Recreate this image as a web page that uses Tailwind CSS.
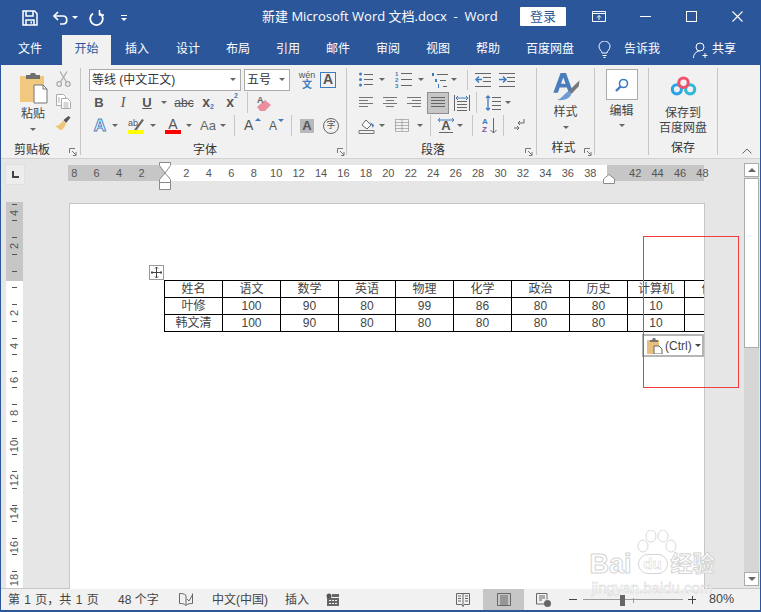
<!DOCTYPE html>
<html lang="zh-CN">
<head>
  <meta charset="UTF-8">
  <title>新建 Microsoft Word 文档.docx - Word</title>
  <script src="https://cdn.jsdelivr.net/npm/@tailwindcss/browser@4"></script>
</head>
<body class="bg-[#2b579a]">
<div class="relative w-[761px] h-[612px] overflow-hidden flex flex-col border-x border-b-2 border-[#2b579a] bg-[#e6e6e6] text-[12px] text-[#444] [font-family:'Liberation_Sans','Noto_Sans_CJK_SC',sans-serif]">

  <!-- Title bar -->
  <header class="h-[35px] shrink-0 bg-[#2b579a] text-white flex items-center">
    <svg class="ml-[21px] w-[16px] h-[16px]" viewBox="0 0 16 16" fill="none" stroke="#fff" stroke-width="1.5"><path d="M1 1h11.5L15 3.5V15H1z"/><path d="M4 1v5h7V1M4 15v-5h8v5"/><path d="M8.5 11.5h1.500v2h-1.500z" fill="#fff" stroke="none"/></svg>
    <svg class="ml-[14px] w-[17px] h-[16px]" viewBox="0 0 17 16" fill="none" stroke="#fff" stroke-width="1.700"><path d="M6 2L2 6l4 4"/><path d="M2 6h9c5 0 5 8 0 8H8"/></svg>
    <i class="ml-[3px] block w-0 h-0 border-x-[3px] border-t-[3px] border-x-transparent border-t-white"></i>
    <svg class="ml-[11px] w-[15px] h-[16px]" viewBox="0 0 15 16" fill="none" stroke="#fff" stroke-width="1.800"><path d="M4 3.500a6.300 6.300 0 1 0 7 0"/><path d="M10.500 0v5H15" stroke-width="1.500"/></svg>
    <span class="ml-[17px] flex flex-col items-center gap-[2px]"><i class="block w-[6px] h-px bg-white"></i><i class="block w-0 h-0 border-x-[3px] border-t-[3px] border-x-transparent border-t-white"></i></span>
    <div class="ml-[135px] mb-[2px] w-[259px] text-[13px] whitespace-pre [font-family:'Open_Sans','Noto_Sans_CJK_SC',sans-serif]">新建 Microsoft Word 文档.docx  -  Word</div>
    <div class="-ml-[1px] mb-[2px] h-[19px] w-[46px] bg-white rounded-[1px] text-[#2b579a] text-[13px] flex items-center justify-center">登录</div>
    <svg class="ml-[26px] mb-[2px] w-[14px] h-[12px]" viewBox="0 0 14 12" fill="none" stroke="#fff"><path d="M.5 .5h13v10H.5z"/><path d="M.5 2.500h13M7 9V4.500M5 6.500l2-2 2 2"/></svg>
    <i class="ml-[34px] mb-[2px] block w-[11px] h-px bg-white"></i>
    <i class="ml-[35px] mb-[2px] block w-[11px] h-[11px] border border-white"></i>
    <svg class="ml-[35px] mb-[2px] w-[11px] h-[11px]" viewBox="0 0 11 11" stroke="#fff" stroke-width="1.100"><path d="M.5 .5l10 10M10.500 .5l-10 10"/></svg>
  </header>

  <!-- Tabs -->
  <nav class="h-[30px] shrink-0 bg-[#2b579a] text-white flex items-center text-[12px] pb-[3px]">
    <a class="w-[61px] pr-[3px] text-center">文件</a>
    <a class="w-[49px] h-[30px] -mb-[3px] pb-[3px] bg-[#f1f1f1] text-[#2b579a] flex items-center justify-center">开始</a>
    <a class="w-[52px] text-center">插入</a>
    <a class="w-[50px] text-center">设计</a>
    <a class="w-[50px] text-center">布局</a>
    <a class="w-[50px] text-center">引用</a>
    <a class="w-[50px] text-center">邮件</a>
    <a class="w-[50px] text-center">审阅</a>
    <a class="w-[50px] text-center">视图</a>
    <a class="w-[50px] text-center">帮助</a>
    <a class="w-[74px] text-center">百度网盘</a>
    <svg class="ml-[11px] mt-[3px] w-[13px] h-[18px]" viewBox="0 0 13 18" fill="none" stroke="#fff"><path d="M4 12c0-2-3-3.500-3-6.500a5.500 5.500 0 0 1 11 0C12 8.500 9 10 9 12z"/><path d="M4.500 14.500h4M5.500 16.500h2"/></svg>
    <a class="ml-[13px] w-[36px]">告诉我</a>
    <svg class="ml-[33px] mt-[3px] w-[15px] h-[17px]" viewBox="0 0 15 17" fill="none" stroke="#fff"><circle cx="7" cy="5" r="4"/><path d="M.5 16c0-4 2.500-6.500 6-7M9.500 13.500h5M12 11v5"/></svg>
    <a class="ml-[4px]">共享</a>
  </nav>

  <!-- Ribbon -->
  <section class="h-[94px] shrink-0 bg-[#f1f1f1] border-b border-[#d2d2d2] flex pt-[3px]">

    <!-- 剪贴板 -->
    <div class="relative w-[80px] h-[87px] border-r border-[#c6c6c6] flex flex-col">
      <div class="h-[75px] flex">
        <div class="ml-[17px] w-[30px] flex flex-col items-center pt-[5px]">
          <svg class="w-[29px] h-[31px]" viewBox="0 0 29 31"><path d="M1 3h24v26H1z" fill="#f0c97e"/><path d="M7 4V2h4l1-2h4l1 2h4v4H7z" fill="#6f6f6f"/><path d="M15 12h9l4 4v14H15z" fill="#fff" stroke="#777"/><path d="M24 12v4h4" fill="none" stroke="#777"/></svg>
          <span class="mt-[2px] leading-[16px]">粘贴</span>
          <i class="mt-[6px] block w-0 h-0 border-x-[3px] border-t-[3px] border-x-transparent border-t-[#666]"></i>
        </div>
        <div class="ml-[7px] flex flex-col items-center pt-[3px] gap-[7px]">
          <svg class="w-[15px] h-[16px]" viewBox="0 0 15 16" fill="none" stroke="#aaa" stroke-width="1.300"><circle cx="3.200" cy="13" r="2.300"/><circle cx="11.800" cy="13" r="2.300"/><path d="M4.500 11L11 .5M10.500 11L4 .5"/></svg>
          <svg class="w-[15px] h-[15px]" viewBox="0 0 15 15" fill="#fff" stroke="#aaa"><path d="M.5 .5h7l2 2v9h-9z"/><path d="M5.500 4.500h6l3 3v7h-9z"/><path d="M7.500 9h5M7.500 11h5M7.500 13h5M2 4h2M2 6h2M2 8h2" fill="none"/></svg>
          <svg class="w-[16px] h-[15px]" viewBox="0 0 16 15"><path d="M15.500 1.500l-2-1.500-5 4 2.500 3z" fill="#555"/><path d="M8 4.500L11 8c-1 3-3 5-5 6.500L0 10c3 0 6-2 8-5.500z" fill="#efc57a"/></svg>
        </div>
      </div>
      <div class="h-[12px] leading-[13px] pl-[13px] pt-[1px] text-[#333]">剪贴板</div>
      <svg class="absolute left-[68px] top-[80px] w-[8px] h-[8px]" viewBox="0 0 8 8" fill="none" stroke="#777"><path d="M.5 5V.5H6M3 3l4 4M7 4v3.500H4"/></svg>
    </div>

    <!-- 字体 -->
    <div class="relative w-[266px] h-[87px] border-r border-[#c6c6c6] flex flex-col">
      <div class="h-[23px] flex items-center">
        <div class="ml-[8px] w-[152px] h-[22px] bg-white border border-[#ababab] flex items-center pl-[2px] text-[12px] text-[#333]">等线 (中文正文)<i class="ml-auto mr-[4px] block w-0 h-0 border-x-[3px] border-t-[3px] border-x-transparent border-t-[#666]"></i></div>
        <div class="ml-[3px] w-[46px] h-[22px] bg-white border border-[#ababab] flex items-center pl-[2px] text-[12px] text-[#333]">五号<i class="ml-auto mr-[4px] block w-0 h-0 border-x-[3px] border-t-[3px] border-x-transparent border-t-[#666]"></i></div>
        <div class="ml-[6px] w-[22px] flex flex-col items-center leading-[10px]"><span class="text-[9px] text-[#555]">wén</span><span class="text-[10px] font-bold text-[#3f7cbf]">文</span></div>
        <div class="ml-[2px] w-[16px] h-[16px] border border-[#3f7cbf] flex items-center justify-center text-[14px] font-bold text-[#555]">A</div>
      </div>
      <div class="h-[23px] flex items-center text-[#555]">
        <span class="ml-[6px] w-[24px] text-center text-[13px] font-bold [font-family:'Liberation_Sans']">B</span>
        <span class="w-[24px] text-center text-[14px] italic [font-family:'Liberation_Serif']">I</span>
        <span class="w-[24px] text-center text-[13px] font-bold underline [font-family:'Liberation_Sans']">U</span>
        <span class="w-[10px] flex justify-center"><i class="block w-0 h-0 border-x-[3px] border-t-[3px] border-x-transparent border-t-[#666]"></i></span>
        <span class="ml-[3px] w-[24px] text-center text-[12px] line-through">abc</span>
        <span class="w-[24px] text-center text-[14px] font-bold">x<sub class="text-[7px] text-[#3f7cbf] align-baseline">2</sub></span>
        <span class="w-[24px] text-center text-[14px] font-bold">x<sup class="text-[7px] text-[#3f7cbf] align-super">2</sup></span>
        <i class="ml-[3px] block w-px h-[21px] bg-[#c6c6c6]"></i>
        <svg class="ml-[9px] w-[15px] h-[16px]" viewBox="0 0 15 16"><path d="M3 16l-3-4 8-7 6 5-6 6z" fill="#eb8f9e"/><text x="0" y="8" font-size="9" fill="#666" font-weight="bold">A</text></svg>
      </div>
      <div class="h-[23px] flex items-center text-[#555]">
        <span class="ml-[12px] w-[14px] text-center text-[17px] font-bold text-white [-webkit-text-stroke:1px_#4a86c5]">A</span>
        <span class="ml-[4px] w-[8px] flex justify-center"><i class="block w-0 h-0 border-x-[3px] border-t-[3px] border-x-transparent border-t-[#666]"></i></span>
        <span class="ml-[9px] w-[16px] flex flex-col items-center"><svg class="w-[16px] h-[12px]" viewBox="0 0 16 12"><text x="0" y="8" font-size="9" fill="#555">ab</text><path d="M6 12l8-11 2 1-8 11z" fill="#666"/></svg><i class="block w-[16px] h-[4px] bg-[#ffff00]"></i></span>
        <span class="ml-[5px] w-[8px] flex justify-center"><i class="block w-0 h-0 border-x-[3px] border-t-[3px] border-x-transparent border-t-[#666]"></i></span>
        <span class="ml-[8px] w-[16px] flex flex-col items-center leading-[12px]"><span class="text-[14px]">A</span><i class="block w-[16px] h-[4px] bg-[#ff0000]"></i></span>
        <span class="ml-[4px] w-[8px] flex justify-center"><i class="block w-0 h-0 border-x-[3px] border-t-[3px] border-x-transparent border-t-[#666]"></i></span>
        <span class="ml-[7px] w-[16px] text-center text-[13px] text-[#666] whitespace-nowrap">Aa</span>
        <span class="ml-[3px] w-[8px] flex justify-center"><i class="block w-0 h-0 border-x-[3px] border-t-[3px] border-x-transparent border-t-[#666]"></i></span>
        <i class="ml-[7px] block w-px h-[21px] bg-[#c6c6c6]"></i>
        <span class="ml-[9px] w-[14px] text-[14px] text-[#555] relative">A<i class="absolute right-[-3px] top-[3px] block w-0 h-0 border-x-[3px] border-b-[3px] border-x-transparent border-b-[#3f7cbf]"></i></span>
        <span class="ml-[11px] w-[12px] text-[12px] text-[#555] relative">A<i class="absolute right-[-3px] top-[2px] block w-0 h-0 border-x-[3px] border-t-[3px] border-x-transparent border-t-[#3f7cbf]"></i></span>
        <i class="ml-[10px] block w-px h-[21px] bg-[#c6c6c6]"></i>
        <span class="ml-[8px] w-[14px] h-[14px] bg-[#b8b8b8] flex items-center justify-center text-[13px] font-bold">A</span>
        <span class="ml-[9px] w-[16px] h-[16px] rounded-full border border-[#666] flex items-center justify-center text-[9px]">字</span>
      </div>
      <div class="mt-[6px] h-[12px] leading-[13px] pl-[112px] pt-[1px] text-[#333]">字体</div>
      <svg class="absolute left-[256px] top-[80px] w-[8px] h-[8px]" viewBox="0 0 8 8" fill="none" stroke="#777"><path d="M.5 5V.5H6M3 3l4 4M7 4v3.500H4"/></svg>
    </div>

    <!-- 段落 -->
    <div class="relative w-[190px] h-[87px] border-r border-[#c6c6c6] flex flex-col">
      <div class="h-[23px] flex items-center">
        <svg class="ml-[12px] w-[14px] h-[15px]" viewBox="0 0 14 15" stroke="#666"><circle cx="1.500" cy="2" r="1.500" fill="#3f7cbf" stroke="none"/><circle cx="1.500" cy="7.500" r="1.500" fill="#3f7cbf" stroke="none"/><circle cx="1.500" cy="13" r="1.500" fill="#3f7cbf" stroke="none"/><path d="M5 2.500h9M5 7.500h9M5 12.500h9"/></svg>
        <span class="ml-[6px] w-[6px] flex justify-center"><i class="block w-0 h-0 border-x-[3px] border-t-[3px] border-x-transparent border-t-[#666]"></i></span>
        <span class="ml-[10px] w-[17px] flex flex-col items-start text-[6px] leading-[6px] text-[#3f7cbf] relative"><b>1</b><b>2</b><b>3</b><svg class="absolute left-[3px] top-0 w-[14px] h-[16px]" viewBox="0 0 14 16" stroke="#666"><path d="M3 2.500h11M3 8.500h11M3 14.500h11"/></svg></span>
        <span class="ml-[6px] w-[6px] flex justify-center"><i class="block w-0 h-0 border-x-[3px] border-t-[3px] border-x-transparent border-t-[#666]"></i></span>
        <svg class="ml-[7px] w-[17px] h-[16px]" viewBox="0 0 17 16" stroke="#666"><path d="M6 2.500h11M9 8.500h6M12 14.500h4"/><path d="M1 1h2v3H1zM4 7h2v3H4zM7 12h1v4H7z" fill="#3f7cbf" stroke="none"/></svg>
        <span class="ml-[3px] w-[6px] flex justify-center"><i class="block w-0 h-0 border-x-[3px] border-t-[3px] border-x-transparent border-t-[#666]"></i></span>
        <i class="ml-[10px] block w-px h-[20px] bg-[#c6c6c6]"></i>
        <svg class="ml-[7px] w-[16px] h-[14px]" viewBox="0 0 16 14" fill="none" stroke="#666"><path d="M0 .5h16M8 4.500h8M8 8.500h8M0 13.500h16"/><path d="M7 6.500H1M4 3.500l-3 3 3 3" stroke="#3f7cbf" stroke-width="1.500"/></svg>
        <svg class="ml-[8px] w-[16px] h-[14px]" viewBox="0 0 16 14" fill="none" stroke="#666"><path d="M0 .5h16M8 4.500h8M8 8.500h8M0 13.500h16"/><path d="M0 6.500h6M4 3.500l3 3-3 3" stroke="#3f7cbf" stroke-width="1.500"/></svg>
      </div>
      <div class="h-[23px] flex items-center">
        <svg class="ml-[12px] w-[14px] h-[11px]" viewBox="0 0 14 11" stroke="#777"><path d="M0 .5h14M0 3.500h9M0 6.500h14M0 9.500h9"/></svg>
        <svg class="ml-[10px] w-[14px] h-[11px]" viewBox="0 0 14 11" stroke="#777"><path d="M0 .5h14M3 3.500h8M0 6.500h14M3 9.500h8"/></svg>
        <svg class="ml-[10px] w-[14px] h-[11px]" viewBox="0 0 14 11" stroke="#777"><path d="M0 .5h14M5 3.500h9M0 6.500h14M5 9.500h9"/></svg>
        <span class="ml-[6px] w-[22px] h-[22px] bg-[#c6c6c6] border border-[#8f8f8f] flex items-center justify-center"><svg class="w-[14px] h-[11px]" viewBox="0 0 14 11" stroke="#666"><path d="M0 .5h14M0 3.500h14M0 6.500h14M0 9.500h14"/></svg></span>
        <svg class="ml-[5px] w-[16px] h-[16px]" viewBox="0 0 16 16" fill="none" stroke="#666"><path d="M.5 0v16M15.500 0v16M3 6.500h10M3 9.500h10M3 12.500h10M3 15.500h10"/><path d="M2 3h12M4 1L2 3l2 2M12 1l2 2-2 2" stroke="#3f7cbf"/></svg>
        <i class="ml-[6px] block w-px h-[21px] bg-[#c6c6c6]"></i>
        <svg class="ml-[8px] w-[16px] h-[16px]" viewBox="0 0 16 16" fill="none" stroke="#666"><path d="M7 2.500h9M7 6.500h9M7 10.500h9M7 14.500h9"/><path d="M3 1v14M1 3l2-2 2 2M1 13l2 2 2-2" stroke="#3f7cbf" stroke-width="1.300"/></svg>
        <span class="ml-[4px] w-[6px] flex justify-center"><i class="block w-0 h-0 border-x-[3px] border-t-[3px] border-x-transparent border-t-[#666]"></i></span>
      </div>
      <div class="h-[23px] flex items-center">
        <svg class="ml-[11px] w-[17px] h-[17px]" viewBox="0 0 17 17"><path d="M4 8l4-5 5 5-4 4z" fill="#fff" stroke="#666"/><path d="M12 5l4 3-1 3z" fill="#3f7cbf"/><path d="M1 13.500h15v3H1z" fill="#f1f1f1" stroke="#777"/></svg>
        <span class="ml-[4px] w-[6px] flex justify-center"><i class="block w-0 h-0 border-x-[3px] border-t-[3px] border-x-transparent border-t-[#666]"></i></span>
        <svg class="ml-[10px] w-[14px] h-[13px]" viewBox="0 0 14 13" fill="none" stroke="#777" stroke-dasharray="1 1"><path d="M.5 .5h13v12H.5zM7 .5v12M.5 6.500h13M.5 3.500h13M.5 9.500h13"/></svg>
        <span class="ml-[8px] w-[6px] flex justify-center"><i class="block w-0 h-0 border-x-[3px] border-t-[3px] border-x-transparent border-t-[#666]"></i></span>
        <i class="ml-[7px] block w-px h-[21px] bg-[#c6c6c6]"></i>
        <span class="ml-[7px] w-[16px] flex flex-col items-center relative text-[13px] font-bold leading-[13px] text-[#555]">A<svg class="absolute left-[-1px] top-[-2px] w-[18px] h-[6px]" viewBox="0 0 18 6" fill="none" stroke="#3f7cbf"><path d="M1 3h16M3 1L1 3l2 2M15 1l2 2-2 2"/></svg><i class="block w-[14px] h-px bg-[#666]"></i></span>
        <span class="ml-[3px] w-[6px] flex justify-center"><i class="block w-0 h-0 border-x-[3px] border-t-[3px] border-x-transparent border-t-[#666]"></i></span>
        <i class="ml-[9px] block w-px h-[21px] bg-[#c6c6c6]"></i>
        <span class="ml-[9px] w-[8px] flex flex-col text-[8px] leading-[8px] font-bold"><b class="text-[#3f7cbf]">A</b><b class="text-[#7a4fa0]">Z</b></span>
        <svg class="w-[7px] h-[16px]" viewBox="0 0 7 16" fill="none" stroke="#666"><path d="M3.500 0v15M.5 12l3 3 3-3"/></svg>
        <i class="ml-[6px] block w-px h-[21px] bg-[#c6c6c6]"></i>
        <svg class="ml-[10px] w-[11px] h-[13px]" viewBox="0 0 11 13" fill="none" stroke="#666"><path d="M10 0v4H4M6 2L4 4l2 2M0 9h5M3 7l2 2-2 2"/></svg>
      </div>
      <div class="mt-[6px] h-[12px] leading-[13px] pl-[74px] pt-[1px] text-[#333]">段落</div>
      <svg class="absolute left-[178px] top-[80px] w-[8px] h-[8px]" viewBox="0 0 8 8" fill="none" stroke="#777"><path d="M.5 5V.5H6M3 3l4 4M7 4v3.500H4"/></svg>
    </div>

    <!-- 样式 -->
    <div class="relative w-[58px] h-[87px] border-r border-[#c6c6c6] flex flex-col items-center">
      <svg class="mt-[5px] w-[30px] h-[31px]" viewBox="0 0 30 31"><path d="M9 0h6l8 22h-5l-2-6H8l-2 6H1zM9.500 12h5L12 5z" fill="#4a7ebb"/><path d="M30 8l-12 12 3 3 8-8z" fill="#777"/><path d="M18 20l3 3c-1 4-6 8-16 7 6-2 8-7 13-10z" fill="#6e9bd0"/></svg>
      <span class="mt-[3px] leading-[16px]">样式</span>
      <i class="mt-[6px] block w-0 h-0 border-x-[3px] border-t-[3px] border-x-transparent border-t-[#666]"></i>
      <span class="mt-[13px] h-[13px] leading-[13px] -ml-[4px] text-[#333]">样式</span>
      <svg class="absolute left-[47px] top-[80px] w-[8px] h-[8px]" viewBox="0 0 8 8" fill="none" stroke="#777"><path d="M.5 5V.5H6M3 3l4 4M7 4v3.500H4"/></svg>
    </div>

    <!-- 编辑 -->
    <div class="w-[54px] h-[87px] border-r border-[#c6c6c6] flex flex-col items-center">
      <div class="mt-[1px] w-[32px] h-[31px] bg-white border border-[#ababab] flex items-center justify-center">
        <svg class="w-[14px] h-[14px]" viewBox="0 0 14 14" fill="none" stroke="#3f7cbf" stroke-width="1.600"><circle cx="8.500" cy="5.500" r="4"/><path d="M5.500 8.500L1 13" stroke-width="2.400"/></svg>
      </div>
      <span class="mt-[3px] leading-[16px]">编辑</span>
      <i class="mt-[5px] block w-0 h-0 border-x-[3px] border-t-[3px] border-x-transparent border-t-[#666]"></i>
    </div>

    <!-- 保存 -->
    <div class="w-[69px] h-[87px] border-r border-[#c6c6c6] flex flex-col items-center">
      <svg class="mt-[8px] w-[27px] h-[21px]" viewBox="0 0 27 21" fill="none" stroke-width="3.200"><circle cx="6.500" cy="14" r="4.800" stroke="#27a5e6"/><circle cx="20.500" cy="14" r="4.800" stroke="#2fb8d8"/><circle cx="13.500" cy="7" r="5" stroke="#f0526a"/></svg>
      <span class="mt-[10px] leading-[15px]">保存到</span>
      <span class="leading-[15px]">百度网盘</span>
      <span class="mt-[6px] h-[13px] leading-[13px] text-[#333]">保存</span>
    </div>
    <div class="flex-1 h-[87px] flex items-end justify-end pr-[8px]">
      <svg class="w-[10px] h-[6px] mb-[1px]" viewBox="0 0 10 6" fill="none" stroke="#666"><path d="M.5 5.500L5 1l4.500 4.500"/></svg>
    </div>
  </section>

  <!-- Document area -->
  <main class="flex-1 min-h-0 flex">
    <div class="w-[743px] min-w-0 flex flex-col">
      <div class="h-[44px] shrink-0 flex items-start pt-[6px]">
        <div class="ml-[4px] w-[20px] h-[21px] bg-[#ededed] border border-[#e0e0e0] flex items-center justify-center -mt-[1px]"><svg class="w-[7px] h-[7px]" viewBox="0 0 7 7" fill="#444"><path d="M0 0h2v5h5v2H0z"/></svg></div>
        <div class="ml-[43px] w-[636px] h-[16px] flex text-[11px] leading-[16px] text-[#555] bg-[linear-gradient(90deg,#c6c6c6_97px,#fff_97px,#fff_539px,#c6c6c6_539px)]">
          <span class="-ml-[5px] w-[22.450px] shrink-0 text-center">8</span><span class="w-[22.450px] shrink-0 text-center">6</span><span class="w-[22.450px] shrink-0 text-center">4</span><span class="w-[22.450px] shrink-0 text-center">2</span><span class="w-[22.450px] shrink-0"></span>
          <span class="w-[22.450px] shrink-0 text-center">2</span><span class="w-[22.450px] shrink-0 text-center">4</span><span class="w-[22.450px] shrink-0 text-center">6</span><span class="w-[22.450px] shrink-0 text-center">8</span><span class="w-[22.450px] shrink-0 text-center">10</span><span class="w-[22.450px] shrink-0 text-center">12</span><span class="w-[22.450px] shrink-0 text-center">14</span><span class="w-[22.450px] shrink-0 text-center">16</span><span class="w-[22.450px] shrink-0 text-center">18</span><span class="w-[22.450px] shrink-0 text-center">20</span><span class="w-[22.450px] shrink-0 text-center">22</span><span class="w-[22.450px] shrink-0 text-center">24</span><span class="w-[22.450px] shrink-0 text-center">26</span><span class="w-[22.450px] shrink-0 text-center">28</span><span class="w-[22.450px] shrink-0 text-center">30</span><span class="w-[22.450px] shrink-0 text-center">32</span><span class="w-[22.450px] shrink-0 text-center">34</span><span class="w-[22.450px] shrink-0 text-center">36</span><span class="w-[22.450px] shrink-0 text-center">38</span><span class="w-[22.450px] shrink-0"></span><span class="w-[22.450px] shrink-0 text-center">42</span><span class="w-[22.450px] shrink-0 text-center">44</span><span class="w-[22.450px] shrink-0 text-center">46</span><span class="w-[22.450px] shrink-0 text-center">48</span>
        </div>
      </div>
      <div class="flex-1 min-h-0 flex">
        <!-- vertical ruler -->
        <div class="ml-[5px] w-[17px] h-[387px] -mt-[1px] overflow-hidden text-[11px] text-[#555] bg-[linear-gradient(#c6c6c6_79px,#fff_79px)]">
          <div class="-mt-[6px] flex flex-col">
            <div class="h-[33.400px] shrink-0 flex flex-col items-center justify-between py-[8px]"><i class="block w-[5px] h-px bg-[#555]"></i><span class="-rotate-90 leading-[12px]">4</span><i class="block w-[5px] h-px bg-[#555]"></i></div>
            <div class="h-[33.400px] shrink-0 flex flex-col items-center justify-between py-[8px]"><i class="block w-[5px] h-px bg-[#555]"></i><span class="-rotate-90 leading-[12px]">2</span><i class="block w-[5px] h-px bg-[#555]"></i></div>
            <div class="h-[33.400px] shrink-0 flex flex-col items-center justify-between py-[8px]"><i class="block w-[5px] h-px bg-[#555]"></i><i class="block w-[5px] h-px bg-[#555]"></i></div>
            <div class="h-[33.400px] shrink-0 flex flex-col items-center justify-between py-[8px]"><i class="block w-[5px] h-px bg-[#555]"></i><span class="-rotate-90 leading-[12px]">2</span><i class="block w-[5px] h-px bg-[#555]"></i></div>
            <div class="h-[33.400px] shrink-0 flex flex-col items-center justify-between py-[8px]"><i class="block w-[5px] h-px bg-[#555]"></i><span class="-rotate-90 leading-[12px]">4</span><i class="block w-[5px] h-px bg-[#555]"></i></div>
            <div class="h-[33.400px] shrink-0 flex flex-col items-center justify-between py-[8px]"><i class="block w-[5px] h-px bg-[#555]"></i><span class="-rotate-90 leading-[12px]">6</span><i class="block w-[5px] h-px bg-[#555]"></i></div>
            <div class="h-[33.400px] shrink-0 flex flex-col items-center justify-between py-[8px]"><i class="block w-[5px] h-px bg-[#555]"></i><span class="-rotate-90 leading-[12px]">8</span><i class="block w-[5px] h-px bg-[#555]"></i></div>
            <div class="h-[33.400px] shrink-0 flex flex-col items-center justify-between py-[8px]"><i class="block w-[5px] h-px bg-[#555]"></i><span class="-rotate-90 leading-[12px]">10</span><i class="block w-[5px] h-px bg-[#555]"></i></div>
            <div class="h-[33.400px] shrink-0 flex flex-col items-center justify-between py-[8px]"><i class="block w-[5px] h-px bg-[#555]"></i><span class="-rotate-90 leading-[12px]">12</span><i class="block w-[5px] h-px bg-[#555]"></i></div>
            <div class="h-[33.400px] shrink-0 flex flex-col items-center justify-between py-[8px]"><i class="block w-[5px] h-px bg-[#555]"></i><span class="-rotate-90 leading-[12px]">14</span><i class="block w-[5px] h-px bg-[#555]"></i></div>
            <div class="h-[33.400px] shrink-0 flex flex-col items-center justify-between py-[8px]"><i class="block w-[5px] h-px bg-[#555]"></i><span class="-rotate-90 leading-[12px]">16</span><i class="block w-[5px] h-px bg-[#555]"></i></div>
            <div class="h-[33.400px] shrink-0 flex flex-col items-center justify-between py-[8px]"><i class="block w-[5px] h-px bg-[#555]"></i><span class="-rotate-90 leading-[12px]">18</span><i class="block w-[5px] h-px bg-[#555]"></i></div>
          </div>
        </div>
        <!-- page -->
        <div class="relative ml-[46px] w-[636px] h-[386px] bg-white border-x border-t border-[#c6c6c6] overflow-hidden pt-[76px] pl-[94px] text-[#444]">
          <div class="absolute left-[79px] top-[61px] w-[15px] h-[15px] border border-[#999] bg-white flex items-center justify-center">
            <svg class="w-[11px] h-[11px]" viewBox="0 0 11 11" fill="none" stroke="#444"><path d="M5.500 0v11M0 5.500h11M4 1.500L5.500 0 7 1.500M4 9.500L5.500 11 7 9.500M1.500 4L0 5.500 1.500 7M9.500 4L11 5.500 9.500 7"/></svg>
          </div>
          <table class="table-fixed border-collapse w-[578px] text-center">
            <tbody>
              <tr class="h-[17px]"><td class="w-[58px] border border-black p-0 pt-px leading-[15px]">姓名</td><td class="w-[58px] border border-black p-0 pt-px leading-[15px]">语文</td><td class="w-[58px] border border-black p-0 pt-px leading-[15px]">数学</td><td class="w-[57px] border border-black p-0 pt-px leading-[15px]">英语</td><td class="w-[58px] border border-black p-0 pt-px leading-[15px]">物理</td><td class="w-[58px] border border-black p-0 pt-px leading-[15px]">化学</td><td class="w-[58px] border border-black p-0 pt-px leading-[15px]">政治</td><td class="w-[58px] border border-black p-0 pt-px leading-[15px]">历史</td><td class="w-[57px] border border-black p-0 pt-px leading-[15px]">计算机</td><td class="w-[58px] border border-black p-0 pt-px leading-[15px]">体育</td></tr>
              <tr class="h-[17px]"><td class="border border-black p-0 pt-px leading-[15px]">叶修</td><td class="border border-black p-0 pt-px leading-[15px]">100</td><td class="border border-black p-0 pt-px leading-[15px]">90</td><td class="border border-black p-0 pt-px leading-[15px]">80</td><td class="border border-black p-0 pt-px leading-[15px]">99</td><td class="border border-black p-0 pt-px leading-[15px]">86</td><td class="border border-black p-0 pt-px leading-[15px]">80</td><td class="border border-black p-0 pt-px leading-[15px]">80</td><td class="border border-black p-0 pt-px leading-[15px]">10</td><td class="border border-black p-0 pt-px leading-[15px]"></td></tr>
              <tr class="h-[17px]"><td class="border border-black p-0 pt-px leading-[15px]">韩文清</td><td class="border border-black p-0 pt-px leading-[15px]">100</td><td class="border border-black p-0 pt-px leading-[15px]">90</td><td class="border border-black p-0 pt-px leading-[15px]">80</td><td class="border border-black p-0 pt-px leading-[15px]">80</td><td class="border border-black p-0 pt-px leading-[15px]">80</td><td class="border border-black p-0 pt-px leading-[15px]">80</td><td class="border border-black p-0 pt-px leading-[15px]">80</td><td class="border border-black p-0 pt-px leading-[15px]">10</td><td class="border border-black p-0 pt-px leading-[15px]"></td></tr>
            </tbody>
          </table>
          <!-- paste options -->
          <div class="absolute left-[572px] top-[130px] w-[62px] h-[23px] bg-white border-2 border-[#b5b5b5] flex items-center pl-[3px] text-[#444]">
            <svg class="w-[16px] h-[16px] shrink-0" viewBox="0 0 16 16"><path d="M0 2h12v14H0z" fill="#e8bf7c"/><path d="M3 2h2l1-2h2l1 2h2v2H3z" fill="#777"/><path d="M7 8h5l3 3v5H7z" fill="#fff" stroke="#666"/></svg>
            <span class="ml-[2px] whitespace-nowrap">(Ctrl)</span>
            <i class="ml-[3px] block w-0 h-0 border-x-[3px] border-t-[3px] border-x-transparent border-t-[#444]"></i>
          </div>
        </div>
      </div>
    </div>
    <!-- scrollbar -->
    <div class="ml-[0px] w-[15px] mt-[4px] mb-[2px] bg-[#d6d6d6] flex flex-col">
      <div class="h-[14px] bg-white border border-[#ababab] flex items-center justify-center"><i class="block w-0 h-0 border-x-[4px] border-b-[4px] border-x-transparent border-b-[#666]"></i></div>
      <div class="mt-[1px] h-[170px] bg-white border border-[#ababab]"></div>
      <div class="mt-auto h-[14px] bg-white border border-[#ababab] flex items-center justify-center"><i class="block w-0 h-0 border-x-[4px] border-t-[4px] border-x-transparent border-t-[#666]"></i></div>
    </div>
  </main>

  <!-- Status bar -->
  <footer class="h-[22px] shrink-0 bg-[#f1f1f1] border-t border-[#c6c6c6] flex items-center text-[#444] text-[12px]">
    <span class="ml-[7px] w-[90px] whitespace-pre [word-spacing:1px]">第 1 页，共 1 页</span>
    <span class="ml-[20px] w-[42px] whitespace-pre">48 个字</span>
    <svg class="ml-[19px] w-[14px] h-[13px]" viewBox="0 0 14 13" fill="none" stroke="#666"><path d="M7 2.500C5 .5 3 .5.500 .5v10c2.500 0 4.500 0 6.500 2 2-2 4-2 6.500-2V.5"/><path d="M7 2.500V12M8 6l2 2 4-7" /></svg>
    <span class="ml-[19px] w-[54px] whitespace-nowrap">中文(中国)</span>
    <span class="ml-[19px] w-[24px]">插入</span>
    <svg class="ml-[17px] w-[13px] h-[13px]" viewBox="0 0 13 13"><circle cx="3" cy="3" r="2.500" fill="#555"/><path d="M6 1h7v3H6zM1 5h12v8H1z" fill="#666"/><path d="M3 7h2v1H3zM6 7h2v1H6zM9 7h2v1H9zM3 10h2v1H3zM6 10h2v1H6zM9 10h2v1H9z" fill="#f1f1f1"/></svg>
    <svg class="ml-[117px] w-[14px] h-[14px]" viewBox="0 0 14 14" fill="none" stroke="#666"><path d="M.5 .5h13v11H8l-1 2-1-2H.5zM7 .5v11M2 3h3M2 5.500h3M2 8h3M9 3h3M9 5.500h3M9 8h3"/></svg>
    <div class="ml-[13px] w-[41px] h-full bg-[#c6c6c6] flex items-center justify-center"><svg class="w-[14px] h-[13px]" viewBox="0 0 14 13" fill="none" stroke="#666"><path d="M.5 .5h13v12H.5zM3 3h8M3 5h8M3 7h8M3 9h8M3 11h8" /></svg></div>
    <svg class="ml-[12px] w-[15px] h-[14px]" viewBox="0 0 15 14" fill="none" stroke="#666"><path d="M9 11H.5V.5H11v6M3 3h6M3 5h6M3 7h3"/><circle cx="11.500" cy="10.500" r="3.500" fill="#666" stroke="none"/></svg>
    <i class="ml-[18px] block w-[8px] h-px bg-[#444]"></i>
    <div class="ml-[6px] w-[100px] h-[10px] flex items-center relative"><i class="block w-full h-px bg-[#999]"></i><i class="absolute left-[37px] top-0 block w-[5px] h-[11px] bg-[#666]"></i><i class="absolute left-[50px] top-[3px] block w-px h-[5px] bg-[#999]"></i></div>
    <span class="ml-[5px] w-[8px] h-[8px] bg-[linear-gradient(#444,#444),linear-gradient(#444,#444)] bg-[size:8px_1px,1px_8px] bg-center bg-no-repeat"></span>
    <span class="ml-[13px] text-[12.500px]">80%</span>
  </footer>

  <!-- Red annotation frame -->
  <div class="absolute left-[642px] top-[236px] w-[96px] h-[152px] border border-[#f03c3c] pointer-events-none"></div>

  <!-- Watermark -->
  <div class="absolute left-[583px] top-[530px] w-[136px] flex flex-col items-center text-white pointer-events-none">
    <svg class="w-[42px] h-[24px] ml-[8px]" viewBox="0 0 42 24" fill="#fff" stroke="#d8d8d8"><ellipse cx="8" cy="16" rx="5" ry="6"/><ellipse cx="16" cy="6" rx="5" ry="6"/><ellipse cx="28" cy="6" rx="5" ry="6"/><ellipse cx="36" cy="16" rx="5" ry="6"/></svg>
    <div class="-mt-[2px] flex items-center h-[24px] leading-[24px] whitespace-nowrap [-webkit-text-stroke:1px_#d4d4d4] font-bold">
      <span class="text-[27px]">Bai</span>
      <span class="ml-[6px] w-[30px] h-[20px] rounded-full border border-[#d4d4d4] bg-white text-[15px] leading-[18px] text-center [-webkit-text-stroke:0.5px_#d4d4d4]">du</span>
      <span class="ml-[3px] text-[22px]">经验</span>
    </div>
    <div class="mt-[4px] text-[15px] leading-[16px] whitespace-nowrap [-webkit-text-stroke:0.5px_#d4d4d4]">jingyan.baidu.com</div>
  </div>

  <!-- Indent markers -->
  <svg class="absolute left-[158px] top-[162px] w-[12px] h-[28px]" viewBox="0 0 12 28" fill="#fff" stroke="#8a8a8a"><path d="M.5 .5h11v3L6 11 .5 3.500z"/><path d="M6 11l5.500 6.500V27.500H.5V17.500z"/><path d="M.5 20.500h11" /></svg>
  <svg class="absolute left-[602px] top-[174px] w-[12px] h-[10px]" viewBox="0 0 12 10" fill="#fff" stroke="#8a8a8a"><path d="M6 .5l5.500 4.500v4.500H.5V5z"/></svg>
</div>
</body>
</html>
